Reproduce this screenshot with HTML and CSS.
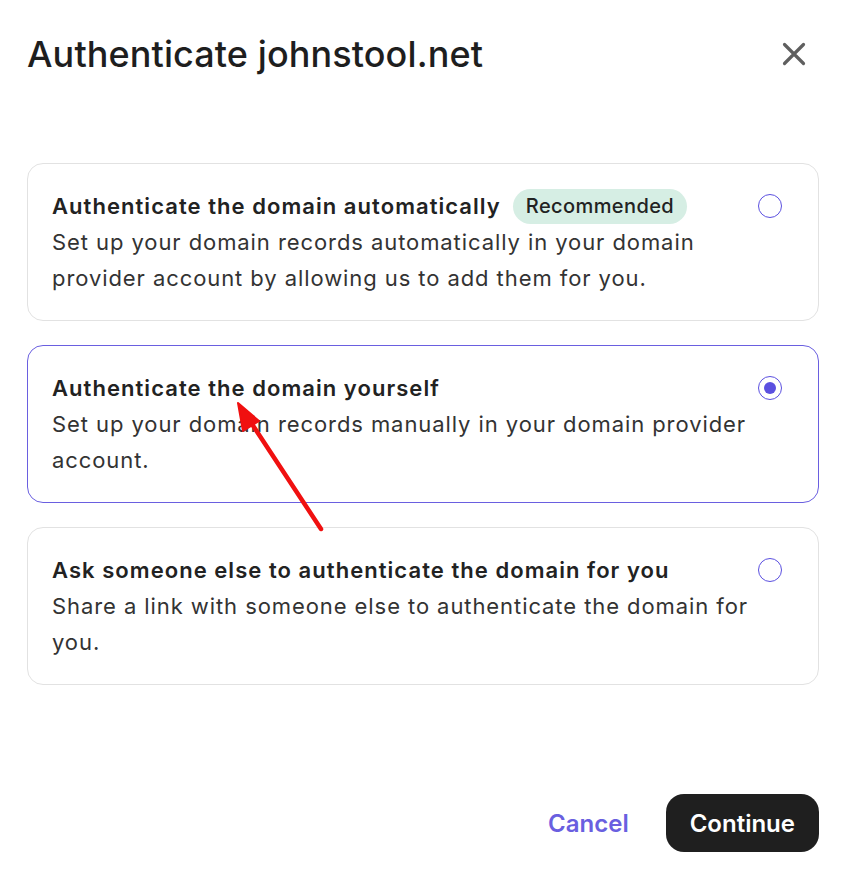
FILE: index.html
```html
<!DOCTYPE html>
<html>
<head>
<meta charset="utf-8">
<link rel="stylesheet" href="styles.css">
</head>
<body>
<div class="dialog">
  <div class="header">
    <h1 class="title">Authenticate johnstool.net</h1>
    <button class="close" aria-label="Close">
      <svg width="24" height="24" viewBox="0 0 24 24"><path d="M2.5 2.5 L21.5 21.5 M21.5 2.5 L2.5 21.5" stroke="#5f5f5f" stroke-width="3.2" stroke-linecap="round"/></svg>
    </button>
  </div>
  <div class="options">
    <div class="card">
      <div class="text">
        <div class="opt-title">Authenticate the domain automatically <span class="badge">Recommended</span></div>
        <div class="opt-desc">Set up your domain records automatically in your domain provider account by allowing us to add them for you.</div>
      </div>
      <span class="radio"></span>
    </div>
    <div class="card selected">
      <div class="text">
        <div class="opt-title">Authenticate the domain yourself</div>
        <div class="opt-desc">Set up your domain records manually in your domain provider account.</div>
      </div>
      <span class="radio checked"></span>
    </div>
    <div class="card">
      <div class="text">
        <div class="opt-title">Ask someone else to authenticate the domain for you</div>
        <div class="opt-desc">Share a link with someone else to authenticate the domain for you.</div>
      </div>
      <span class="radio"></span>
    </div>
  </div>
  <div class="footer">
    <button class="cancel">Cancel</button>
    <button class="continue">Continue</button>
  </div>
  <svg class="arrow" width="856" height="896" viewBox="0 0 856 896">
    <line x1="321" y1="529" x2="250" y2="421" stroke="#f01010" stroke-width="4.5" stroke-linecap="round"/>
    <polygon points="238,403 259,421 243,431" fill="#f01010" stroke="#f01010" stroke-width="2" stroke-linejoin="round"/>
  </svg>
</div>
</body>
</html>
```
FILE: styles.css
```css
* { box-sizing: border-box; }
html, body { margin: 0; padding: 0; background: #fff; }
body { font-family: Inter, "Noto Sans", sans-serif; color: #222; }
.dialog { position: relative; width: 856px; height: 896px; padding: 34px 37px 0 27px; }
.header { display: flex; justify-content: space-between; align-items: center; height: 40px; }
.title { margin: 0; font-size: 36px; line-height: 40px; font-weight: 500; letter-spacing: 0.1px; color: #1e1e1e; }
.close { border: 0; background: none; padding: 0; margin-right: 13px; width: 24px; height: 24px; display: flex; }
.options { display: flex; flex-direction: column; gap: 24px; margin-top: 89px; }
.card { display: flex; align-items: flex-start; border: 1px solid #e2e2e2; border-radius: 16px; padding: 24px 36px 24px 24px; height: 158px; }
.card.selected { border-color: #6a5fe0; }
.text { flex: 1; }
.opt-title { font-size: 22px; line-height: 36px; font-weight: 600; letter-spacing: 1.05px; color: #222; display: flex; align-items: center; white-space: nowrap; }
.opt-desc { font-size: 22px; line-height: 36px; letter-spacing: 0.92px; color: #333; }
.badge { display: inline-block; margin-left: 12px; background: #d6eee4; border-radius: 18px; padding: 0 13px 0 13px; height: 35px; line-height: 35px; font-weight: 500; font-size: 20px; letter-spacing: 0.4px; color: #222; }
.radio { flex: none; width: 24px; height: 24px; border: 1.5px solid #5b50e0; border-radius: 50%; margin-top: 6px; position: relative; }
.radio.checked::after { content: ""; position: absolute; left: 4.5px; top: 4.5px; width: 12px; height: 12px; border-radius: 50%; background: #5b50e0; }
.footer { display: flex; justify-content: flex-end; align-items: center; gap: 37px; margin-top: 109px; }
.cancel { border: 0; background: none; padding: 0; font-family: Inter, sans-serif; font-size: 24px; font-weight: 600; color: #6a5fe0; }
.continue { border: 0; background: #1f1f1f; color: #fff; font-family: Inter, sans-serif; font-size: 24px; font-weight: 600; height: 58px; padding: 0 24px; border-radius: 18px; }
.arrow { position: absolute; left: 0; top: 0; pointer-events: none; }
```
